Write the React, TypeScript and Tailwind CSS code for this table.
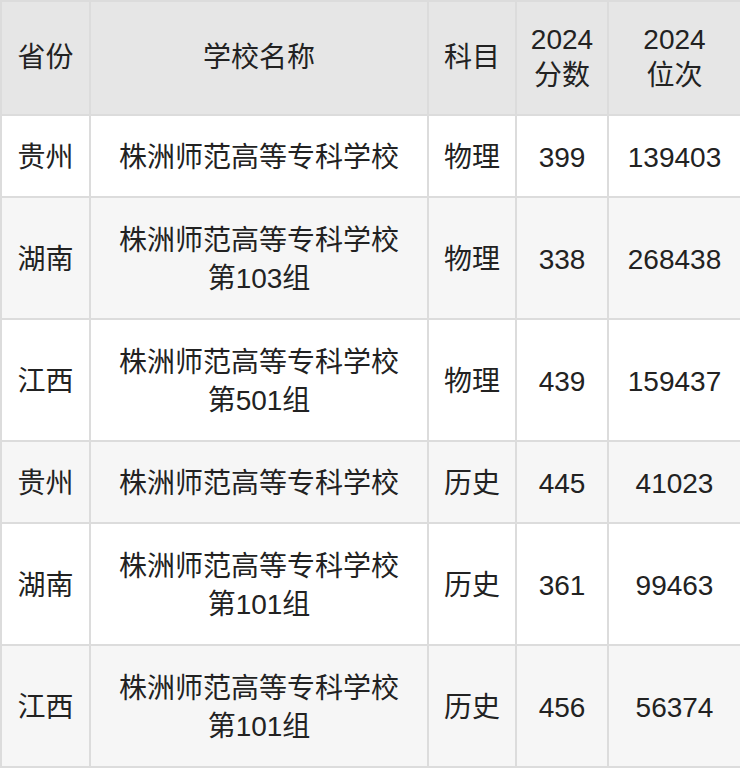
const rows = [
  { prov: "贵州", school: ["株洲师范高等专科学校"], subj: "物理", score: "399", rank: "139403" },
  { prov: "湖南", school: ["株洲师范高等专科学校", "第103组"], subj: "物理", score: "338", rank: "268438" },
  { prov: "江西", school: ["株洲师范高等专科学校", "第501组"], subj: "物理", score: "439", rank: "159437" },
  { prov: "贵州", school: ["株洲师范高等专科学校"], subj: "历史", score: "445", rank: "41023" },
  { prov: "湖南", school: ["株洲师范高等专科学校", "第101组"], subj: "历史", score: "361", rank: "99463" },
  { prov: "江西", school: ["株洲师范高等专科学校", "第101组"], subj: "历史", score: "456", rank: "56374" },
];

const cell = "border-2 border-[#dcdcdc] text-center align-middle px-0";

export default function App() {
  return (
    <div
      className="w-[740px] bg-white text-[#222] text-[28px] leading-[38px]"
      style={{ fontFamily: '"Liberation Sans", "Noto Sans CJK SC", sans-serif' }}
    >
      <table className="w-[740px] border-collapse table-fixed">
        <colgroup>
          <col className="w-[89px]" />
          <col className="w-[338px]" />
          <col className="w-[88px]" />
          <col className="w-[92px]" />
          <col className="w-[133px]" />
        </colgroup>
        <thead>
          <tr className="h-[114px] bg-[#e6e6e6] leading-[36px]">
            <th className={`${cell} font-normal`}>省份</th>
            <th className={`${cell} font-normal`}>学校名称</th>
            <th className={`${cell} font-normal`}>科目</th>
            <th className={`${cell} font-normal`}>2024<br />分数</th>
            <th className={`${cell} font-normal`}>2024<br />位次</th>
          </tr>
        </thead>
        <tbody>
          {rows.map((r, i) => (
            <tr
              key={i}
              className={`${r.school.length > 1 ? "h-[122px]" : "h-[82px]"} ${i % 2 === 1 ? "bg-[#f6f6f6]" : "bg-white"}`}
            >
              <td className={`${cell} pt-[3px]`}>{r.prov}</td>
              <td className={`${cell} pt-[3px]`}>
                {r.school.map((s) => (
                  <div key={s}>{s}</div>
                ))}
              </td>
              <td className={`${cell} pt-[3px]`}>{r.subj}</td>
              <td className={`${cell} pt-[3px]`}>{r.score}</td>
              <td className={`${cell} pt-[3px]`}>{r.rank}</td>
            </tr>
          ))}
        </tbody>
      </table>
    </div>
  );
}
